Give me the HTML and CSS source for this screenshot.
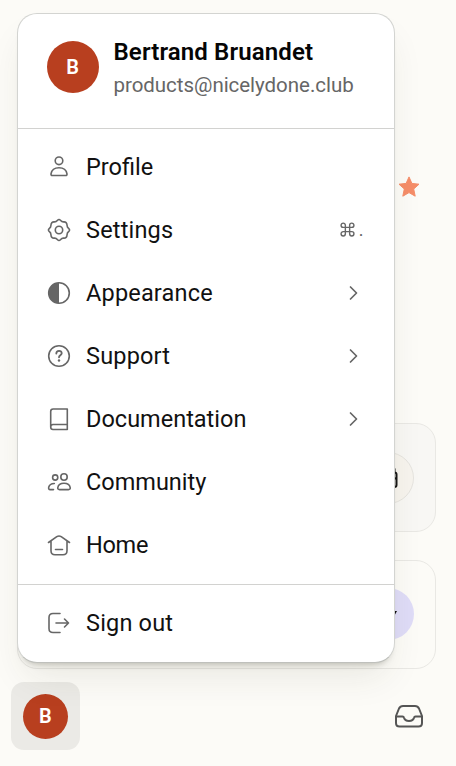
FILE: index.html
```
<!DOCTYPE html>
<html lang="en">
<head>
<meta charset="utf-8">
<title>Account menu</title>
<link rel="stylesheet" href="styles.css">
</head>
<body>
<main class="sidebar">
  <div class="favorite">
    <svg width="22" height="22" viewBox="0 0 22 22"><path d="M11 .9l2.900 6.500 7.100.8-5.300 4.800 1.500 7.200-6.200-3.600-6.200 3.600L6.300 13 1 8.200l7.100-.8z" fill="#f58d68" stroke="#f58d68" stroke-linejoin="round"/></svg>
  </div>
  <section class="card card-shaded">
    <span class="badge badge-outline">
      <svg width="24" height="24" viewBox="0 0 24 24" fill="none" stroke="#171717" stroke-width="2" stroke-linecap="round"><path d="M5 6.500h13.500q2 0 2 2V19q0 2-2 2H5q-2 0-2-2V8.500q0-2 2-2zM4 12.500h15.500M7 3v3M18.500 3v3"/></svg>
    </span>
  </section>
  <section class="card">
    <span class="badge badge-lilac">
      <svg width="24" height="24" viewBox="0 0 24 24"><path d="M4 9h17l-4 7H4z" fill="#111"/></svg>
    </span>
  </section>
  <footer class="footer">
    <button class="account"><span class="avatar avatar-small">B</span></button>
    <svg class="inbox" width="32" height="28" viewBox="0 0 32 28" fill="none" stroke="#555" stroke-width="2" stroke-linejoin="round"><path d="M6 6.500Q7.200 4 10 4h12q2.800 0 4 2.500L29 14v7q0 3.500-3.500 3.500h-19Q3 24.500 3 21V14z"/><path d="M3 14.600h6.500q1.200 0 1.500 1.200c1.200 4.300 8.800 4.300 10 0q.3-1.200 1.500-1.200H29"/></svg>
  </footer>
</main>

<nav class="menu">
  <header class="profile">
    <span class="avatar">B</span>
    <div>
      <div class="name">Bertrand Bruandet</div>
      <div class="email">products@nicelydone.club</div>
    </div>
  </header>
  <div class="group">
    <a class="item">
      <svg class="icon" viewBox="0 0 24 24"><circle cx="12" cy="5.800" r="3.800"/><path d="M12 12.800c4.600 0 7.400 2.700 8 6.100q.2 1.600-1.400 1.600H5.400q-1.600 0-1.400-1.600c.6-3.400 3.400-6.100 8-6.100z"/></svg>
      <span class="label">Profile</span>
    </a>
    <a class="item">
      <svg class="icon" viewBox="0 0 24 24"><circle cx="12" cy="12" r="3.700"/><path d="M10.600 2.200Q12 .7 13.400 2.200C14.600 3.600 15 4 16.500 3.900Q19.900 3.500 20.100 7.500C20 9 20.400 9.400 21.800 10.600Q23.300 12 21.800 13.400C20.400 14.600 20 15 20.100 16.500Q19.900 20.500 16.500 20.100C15 20 14.600 20.400 13.400 21.800Q12 23.300 10.600 21.800C9.400 20.400 9 20 7.500 20.100Q4.100 20.500 3.900 16.500C4 15 3.600 14.600 2.200 13.400Q.7 12 2.200 10.600C3.600 9.400 4 9 3.900 7.500Q4.100 3.500 7.500 3.900C9 4 9.400 3.600 10.600 2.200z"/></svg>
      <span class="label label-wide">Settings</span>
      <span class="shortcut"><svg width="15" height="15" viewBox="0 0 14 14"><path d="M5 5V3a2 2 0 1 0-2 2h8a2 2 0 1 0-2-2v8a2 2 0 1 0 2-2H3a2 2 0 1 0 2 2V5"/></svg><span>.</span></span>
    </a>
    <a class="item">
      <svg class="icon" viewBox="0 0 24 24"><circle cx="12" cy="12" r="10.300"/><path class="solid" d="M12 1.700a10.300 10.300 0 0 0 0 20.600z"/></svg>
      <span class="label label-wide">Appearance</span>
      <svg class="chevron" viewBox="0 0 10 16"><path d="M1.500 2l6 6-6 6"/></svg>
    </a>
    <a class="item">
      <svg class="icon" viewBox="0 0 24 24"><circle cx="12" cy="12" r="10.300"/><path class="bold" d="M9.300 9.500C9.400 5.800 15 6.200 14.700 9.300 14.500 11.300 12 11.200 12 13.300"/><circle class="solid" cx="12" cy="16.500" r="1.200"/></svg>
      <span class="label label-wide">Support</span>
      <svg class="chevron" viewBox="0 0 10 16"><path d="M1.500 2l6 6-6 6"/></svg>
    </a>
    <a class="item">
      <svg class="icon" viewBox="0 0 24 24"><path d="M20.300 17.500H6q-2.300 0-2.300 2.500T6 22.500h14.300V2H6.200Q3.700 2 3.700 4.500V20"/></svg>
      <span class="label">Documentation</span>
      <svg class="chevron" viewBox="0 0 10 16"><path d="M1.500 2l6 6-6 6"/></svg>
    </a>
    <a class="item">
      <svg class="icon" viewBox="0 0 24 24"><circle cx="8.200" cy="7.500" r="2.600"/><circle cx="17" cy="7" r="3.200"/><path d="M17 13.200c3.600 0 5.800 2 6.200 4.400q.3 2-1.700 2h-9q-2 0-1.700-2c.4-2.400 2.600-4.400 6.200-4.400zM7.300 13.500c-3 .1-5 1.500-5.600 3.800q-.4 2.200 1.500 2.300h3.300"/></svg>
      <span class="label">Community</span>
    </a>
    <a class="item">
      <svg class="icon" viewBox="0 0 24 24"><path d="M1.500 9.500L9.800 3.700Q12 2.300 14.200 3.700L22.500 9.500M4 8v9.700q0 4 4 4h8q4 0 4-4V8M8.500 16.500h7"/></svg>
      <span class="label label-tight">Home</span>
    </a>
  </div>
  <div class="group">
    <a class="item">
      <svg class="icon" viewBox="0 0 24 24"><path d="M13 2.500H6q-4 0-4 4v11q0 4 4 4h7M9 12h12.500M17.500 8l4 4-4 4"/></svg>
      <span class="label label-wide">Sign out</span>
    </a>
  </div>
</nav>
</body>
</html>
```

FILE: styles.css
```
* { box-sizing: border-box; }

body {
  margin: 0;
  position: relative;
  height: 766px;
  overflow: hidden;
  background: #fcfbf7;
  color: #111;
  font-family: Roboto, "Liberation Sans", sans-serif;
}

.sidebar {
  display: flex;
  flex-direction: column;
  height: 766px;
  padding: 176px 20px 0 17px;
}

.favorite {
  display: flex;
  justify-content: flex-end;
  height: 247px;
  padding-right: 16px;
}

.card {
  display: flex;
  align-items: center;
  justify-content: flex-end;
  height: 109px;
  margin-bottom: 27.500px;
  padding-right: 21px;
  border: 1.500px solid #e9e8e4;
  border-radius: 20px;
}

.card-shaded { background: #f8f7f4; }

.badge {
  display: grid;
  place-items: center;
  width: 52px;
  height: 52px;
  border-radius: 50%;
}

.badge-outline { border: 1px solid #e6e4df; background: #f7f4ee; }
.badge-lilac { background: #dfdcf7; }

.footer {
  display: flex;
  align-items: center;
  justify-content: space-between;
  margin: -14px -5px 0 -6px;
  padding-right: 16px;
}

.account {
  display: grid;
  place-items: center;
  width: 68.500px;
  height: 68px;
  padding: 0;
  border: 0;
  border-radius: 13px;
  background: #ebeae6;
  font-family: inherit;
}

.avatar {
  display: grid;
  place-items: center;
  flex: none;
  width: 52px;
  height: 52px;
  border-radius: 50%;
  background: #b83f1f;
  color: #fff;
  font-size: 20px;
  font-weight: 600;
}

.avatar-small { width: 45px; height: 45px; }

.menu {
  position: absolute;
  top: 13px;
  left: 17px;
  width: 377.500px;
  height: 649.500px;
  border: 1px solid #d3d4d1;
  border-bottom-color: #bfc0bc;
  border-radius: 20px;
  background: #fff;
  box-shadow: 0 6px 6px -5px rgba(40, 40, 20, .28), 0 20px 36px -8px rgba(60, 55, 30, .1);
}

.profile {
  display: flex;
  gap: 15px;
  height: 114px;
  padding: 21px 28px 0 28.500px;
}

.profile .avatar { margin-top: 6px; }

.name {
  color: #050505;
  font-size: 24px;
  font-weight: 600;
  letter-spacing: .13px;
  line-height: 34px;
  white-space: nowrap;
}

.email {
  color: #666;
  font-size: 20.500px;
  letter-spacing: -.04px;
  line-height: 33px;
  white-space: nowrap;
}

.group {
  padding: 6px 0 8px;
  border-top: 1px solid #d2d2d0;
}

.item {
  display: flex;
  align-items: center;
  height: 63px;
  padding: 0 30px 0 29px;
}

.icon {
  width: 24px;
  height: 24px;
  margin-right: 15px;
  overflow: visible;
}

.icon,
.chevron,
.shortcut svg {
  flex: none;
  fill: none;
  stroke: #666;
  stroke-width: 1.600;
  stroke-linecap: round;
  stroke-linejoin: round;
}

.icon .solid { fill: #666; stroke: none; }
.icon .bold { stroke-width: 1.800; }

.label {
  flex: 1;
  font-size: 23.500px;
  line-height: 32px;
}

.label-wide { letter-spacing: .18px; }
.label-tight { letter-spacing: -.3px; }

.chevron {
  width: 10px;
  height: 16px;
  margin-right: 5px;
  stroke-width: 1.700;
}

.shortcut {
  display: flex;
  align-items: center;
  gap: 4px;
  color: #666;
  font-size: 18px;
}

.shortcut svg { stroke-width: 1.300; }
```
